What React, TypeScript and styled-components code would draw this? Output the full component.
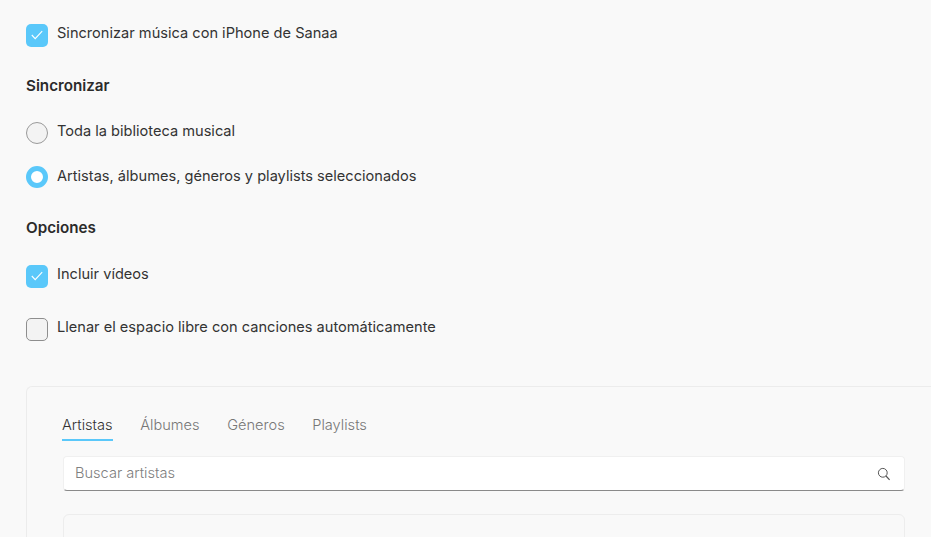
import styled, { createGlobalStyle } from "styled-components";

const GlobalStyle = createGlobalStyle`
  html, body {
    margin: 0;
    padding: 0;
    width: 931px;
    height: 537px;
    overflow: hidden;
    background: #f9f9f9;
  }
`;

const tabs = ["Artistas", "Álbumes", "Géneros", "Playlists"];

function Check() {
  return (
    <svg width="12" height="10" viewBox="0 0 12 10" fill="none">
      <path d="M0.8 5 L4.2 8.6 L11.2 1.2" stroke="#fff" strokeWidth="1.1" />
    </svg>
  );
}

function Option({
  kind,
  checked,
  label,
  gap,
}: {
  kind: "check" | "radio";
  checked?: boolean;
  label: string;
  gap: number;
}) {
  return (
    <Row $gap={gap}>
      {kind === "check" ? (
        <CheckBox $checked={checked}>{checked && <Check />}</CheckBox>
      ) : (
        <Radio $checked={checked} />
      )}
      <span>{label}</span>
    </Row>
  );
}

export default function App() {
  return (
    <Page>
      <GlobalStyle />
      <Option kind="check" checked label="Sincronizar música con iPhone de Sanaa" gap={30} />
      <Heading $gap={27}>Sincronizar</Heading>
      <Option kind="radio" label="Toda la biblioteca musical" gap={22} />
      <Option kind="radio" checked label="Artistas, álbumes, géneros y playlists seleccionados" gap={29} />
      <Heading $gap={28}>Opciones</Heading>
      <Option kind="check" checked label="Incluir vídeos" gap={30} />
      <Option kind="check" label="Llenar el espacio libre con canciones automáticamente" gap={45} />
      <Panel>
        <Tabs>
          {tabs.map((tab, i) => (
            <Tab key={tab} $active={i === 0}>
              {tab}
            </Tab>
          ))}
        </Tabs>
        <Search>
          <span>Buscar artistas</span>
          <svg width="14" height="14" viewBox="0 0 14 14" fill="none">
            <circle cx="5.8" cy="5.8" r="4.4" stroke="#555" strokeWidth="1" />
            <path d="M9 9 L12.6 12.8" stroke="#555" strokeWidth="1.2" />
          </svg>
        </Search>
        <List />
      </Panel>
    </Page>
  );
}

const Page = styled.div`
  display: flex;
  flex-direction: column;
  width: 931px;
  height: 537px;
  overflow: hidden;
  box-sizing: border-box;
  padding: 24px 0 0 26px;
  font-family: Inter, "Liberation Sans", sans-serif;
  font-size: 14.6px;
  color: #333;
`;

const Row = styled.div<{ $gap: number }>`
  display: flex;
  align-items: flex-start;
  gap: 9px;
  height: 23px;
  margin-bottom: ${(p) => p.$gap}px;
  line-height: 18px;
  flex-shrink: 0;
`;

const CheckBox = styled.div<{ $checked?: boolean }>`
  width: 22px;
  height: 22.5px;
  box-sizing: border-box;
  border-radius: 5px;
  display: flex;
  align-items: center;
  justify-content: center;
  background: ${(p) => (p.$checked ? "#5ac8fa" : "#f3f3f3")};
  border: ${(p) => (p.$checked ? "none" : "1px solid #8e8e8e")};
`;

const Radio = styled.div<{ $checked?: boolean }>`
  width: 22px;
  height: 22px;
  box-sizing: border-box;
  border-radius: 50%;
  margin-top: ${(p) => (p.$checked ? "-1px" : "0")};
  background: ${(p) => (p.$checked ? "#fff" : "#f3f3f3")};
  border: ${(p) => (p.$checked ? "5px solid #5ac8fa" : "1px solid #9a9a9a")};
`;

const Heading = styled.div<{ $gap: number }>`
  font-size: 15.2px;
  font-weight: 600;
  color: #2b2b2b;
  line-height: 17px;
  margin-bottom: ${(p) => p.$gap + 1}px;
  flex-shrink: 0;
`;

const Panel = styled.div`
  flex-shrink: 0;
  width: 920px;
  box-sizing: border-box;
  border: 1px solid #ececec;
  border-right: none;
  border-radius: 6px 0 0 0;
  padding: 29px 26px 0 35px;
`;

const Tabs = styled.div`
  display: flex;
  gap: 27.6px;
  margin-bottom: 15px;
`;

const Tab = styled.div<{ $active?: boolean }>`
  font-weight: 300;
  line-height: 18px;
  padding-bottom: 5px;
  color: ${(p) => (p.$active ? "#333" : "#777")};
  border-bottom: 2px solid ${(p) => (p.$active ? "#5ac8fa" : "transparent")};
`;

const Search = styled.div`
  height: 35px;
  width: 842px;
  margin-left: 1px;
  box-sizing: border-box;
  display: flex;
  align-items: center;
  justify-content: space-between;
  padding: 0 13px 2px 11px;
  background: #fff;
  border: 1px solid #f0f0f0;
  border-bottom: 1px solid #8a8a8a;
  border-radius: 4px;
  color: #808080;
  margin-bottom: 23px;
  font-weight: 300;

  svg {
    margin-top: 2px;
  }
`;

const List = styled.div`
  width: 842px;
  height: 60px;
  margin-left: 1px;
  box-sizing: border-box;
  border: 1px solid #ededed;
  border-radius: 6px;
`;
